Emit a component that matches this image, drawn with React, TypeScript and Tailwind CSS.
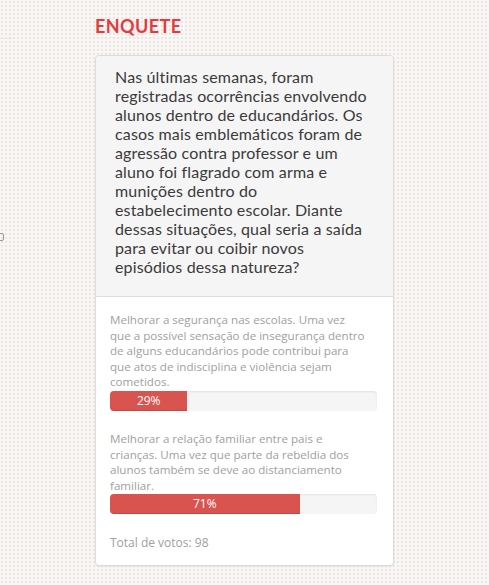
import React from "react";

const question = [
  "Nas últimas semanas, foram",
  "registradas ocorrências envolvendo",
  "alunos dentro de educandários. Os",
  "casos mais emblemáticos foram de",
  "agressão contra professor e um",
  "aluno foi flagrado com arma e",
  "munições dentro do",
  "estabelecimento escolar. Diante",
  "dessas situações, qual seria a saída",
  "para evitar ou coibir novos",
  "episódios dessa natureza?",
];

const options = [
  {
    lines: [
      "Melhorar a segurança nas escolas. Uma vez",
      "que a possível sensação de insegurança dentro",
      "de alguns educandários pode contribui para",
      "que atos de indisciplina e violência sejam",
      "cometidos.",
    ],
    pct: 29,
  },
  {
    lines: [
      "Melhorar a relação familiar entre pais e",
      "crianças. Uma vez que parte da rebeldia dos",
      "alunos também se deve ao distanciamento",
      "familiar.",
    ],
    pct: 71,
  },
];

export default function App() {
  return (
    <div className="relative w-[489px] h-[585px] overflow-hidden bg-[#f9f7f6] bg-[image:radial-gradient(#ece4e1_0.8px,transparent_1px)] bg-[size:4px_4px]">
      <div className="absolute left-0 top-[38px] w-[12px] h-px bg-[#e9e4e2]" />
      <div className="absolute left-[-8px] top-[233px] w-[12px] h-[8px] border border-[#9a9a9a] rounded-[2px]" />
      <div className="pl-[95px] pt-[15px]">
        <h2 className="text-[18px] leading-[22px] font-bold text-[#e23c40] tracking-[0.4px] [font-family:Lato,sans-serif]">
          ENQUETE
        </h2>
        <div className="mt-[18px] w-[299px] bg-white border border-[#dcdcdc] rounded-[4px] shadow-[0_1px_2px_rgba(0,0,0,0.06)]">
          <div className="bg-[#f5f5f5] border-b border-[#dddddd] rounded-t-[4px] pl-[19px] pr-[10px] pt-[11px] pb-[20px] text-[16px] leading-[19px] tracking-[0.15px] text-[#3a3a3a] [font-family:Lato,sans-serif]">
            {question.map((l, i) => (
              <div key={i} className="whitespace-nowrap">{l}</div>
            ))}
          </div>
          <div className="px-[14px] pt-[15px] pb-[14px] [font-family:'Open_Sans',sans-serif]">
            {options.map((o, i) => (
              <div key={i} className="mb-[20px]">
                <div className="text-[11.6px] leading-[15.6px] text-[#a0a0a0]">
                  {o.lines.map((l, j) => (
                    <div key={j} className="whitespace-nowrap">{l}</div>
                  ))}
                </div>
                <div className="mt-[1px] h-[20px] w-[267px] bg-[#f5f5f5] rounded-[4px] shadow-[inset_0_1px_2px_rgba(0,0,0,0.08)] overflow-hidden">
                  <div
                    className="h-full bg-[#d9534f] text-white text-[12px] leading-[20px] text-center shadow-[inset_0_-1px_0_rgba(0,0,0,0.12)]"
                    style={{ width: `${o.pct}%` }}
                  >
                    {o.pct}%
                  </div>
                </div>
              </div>
            ))}
            <div className="text-[12px] leading-[17px] text-[#a0a0a0]">Total de votos: 98</div>
          </div>
        </div>
      </div>
    </div>
  );
}
